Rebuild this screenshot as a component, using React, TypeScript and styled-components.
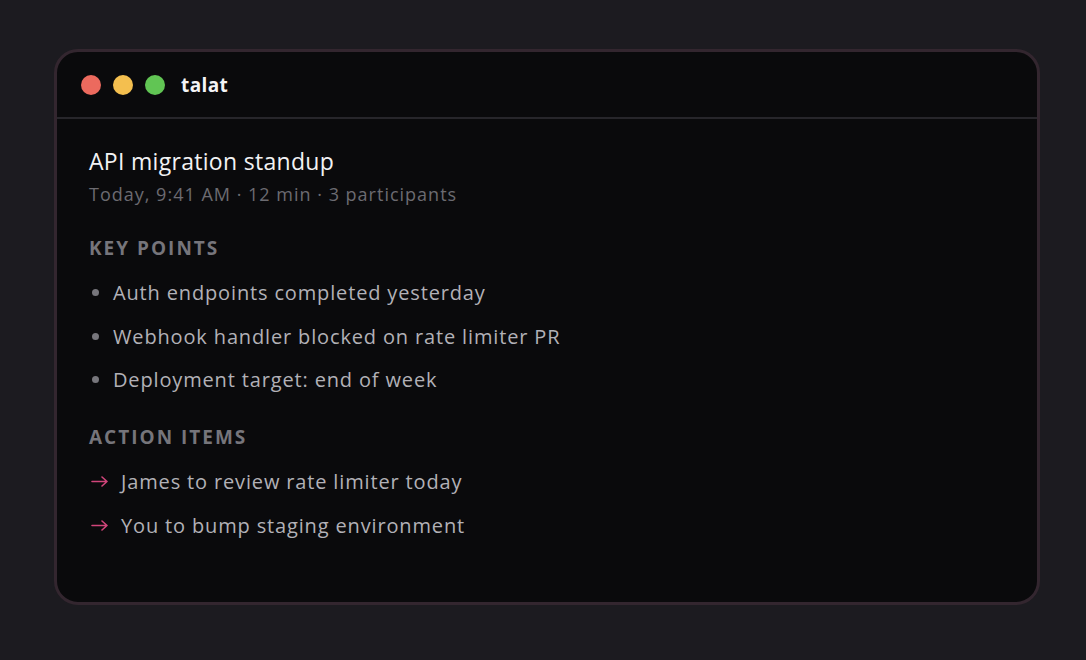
import React from "react";
import styled, { createGlobalStyle } from "styled-components";

const Global = createGlobalStyle`
  html, body { margin: 0; padding: 0; background: #1c1b20; }
  body { font-family: "Open Sans", "Noto Sans", sans-serif; -webkit-font-smoothing: antialiased; font-variant-ligatures: none; }
  * { box-sizing: border-box; }
`;

const Page = styled.div`
  width: 1086px;
  height: 660px;
  padding: 49px 46px 55px 54px;
  background: #1c1b20;
`;

const Card = styled.div`
  height: 556px;
  border: 3px solid #33262f;
  border-radius: 24px;
  background: #0a0a0c;
  overflow: hidden;
  display: flex;
  flex-direction: column;
`;

const Header = styled.div`
  height: 67px;
  display: flex;
  align-items: center;
  padding: 0 0 0 24px;
  gap: 12px;
  border-bottom: 2px solid #27262b;
`;

const Dot = styled.span<{ $c: string }>`
  width: 20px;
  height: 20px;
  border-radius: 50%;
  background: ${(p) => p.$c};
`;

const AppName = styled.span`
  margin-left: 4px;
  color: #f4f4f6;
  font-weight: 700;
  font-size: 19px;
  letter-spacing: 0.4px;
`;

const Body = styled.div`
  padding: 27px 32px 0 32px;
  display: flex;
  flex-direction: column;
`;

const Title = styled.h1`
  margin: 0;
  font-size: 23px;
  font-weight: 500;
  letter-spacing: 0.3px;
  color: #f2f2f4;
  line-height: 30px;
`;

const Meta = styled.div`
  margin-top: 5px;
  font-size: 18px;
  letter-spacing: 1px;
  color: #6c6b71;
  line-height: 26px;
`;

const SectionLabel = styled.div<{ $top: number }>`
  margin-top: ${(p) => p.$top}px;
  font-size: 19px;
  font-weight: 700;
  letter-spacing: 2px;
  color: #76757b;
  line-height: 26px;
`;

const List = styled.ul`
  list-style: none;
  margin: 18px 0 0 0;
  padding: 0;
  display: flex;
  flex-direction: column;
  gap: 16.5px;
`;

const Item = styled.li`
  display: flex;
  align-items: center;
  font-size: 20px;
  letter-spacing: 0.85px;
  color: #b2b1b7;
  line-height: 27px;
`;

const Bullet = styled.span`
  width: 7px;
  height: 7px;
  border-radius: 50%;
  background: #77767c;
  margin: 0 14px 0 3px;
  flex: none;
`;

const Arrow = styled.svg`
  width: 17px;
  height: 11px;
  margin: 0 13px 0 2px;
  flex: none;
`;

const points = [
  "Auth endpoints completed yesterday",
  "Webhook handler blocked on rate limiter PR",
  "Deployment target: end of week",
];
const actions = ["James to review rate limiter today", "You to bump staging environment"];

export default function App() {
  return (
    <>
      <Global />
      <Page>
        <Card>
          <Header>
            <Dot $c="#ec6a5e" />
            <Dot $c="#f4bf4f" />
            <Dot $c="#61c554" />
            <AppName>talat</AppName>
          </Header>
          <Body>
            <Title>API migration standup</Title>
            <Meta>Today, 9:41 AM · 12 min · 3 participants</Meta>
            <SectionLabel $top={28}>KEY POINTS</SectionLabel>
            <List>
              {points.map((t) => (
                <Item key={t}>
                  <Bullet />
                  {t}
                </Item>
              ))}
            </List>
            <SectionLabel $top={31}>ACTION ITEMS</SectionLabel>
            <List>
              {actions.map((t) => (
                <Item key={t}>
                  <Arrow viewBox="0 0 17 11" fill="none" stroke="#d0457a" strokeWidth="1.6" strokeLinecap="round" strokeLinejoin="round">
                    <path d="M1 5.5h15M11 1l5 4.5-5 4.5" />
                  </Arrow>
                  {t}
                </Item>
              ))}
            </List>
          </Body>
        </Card>
      </Page>
    </>
  );
}
